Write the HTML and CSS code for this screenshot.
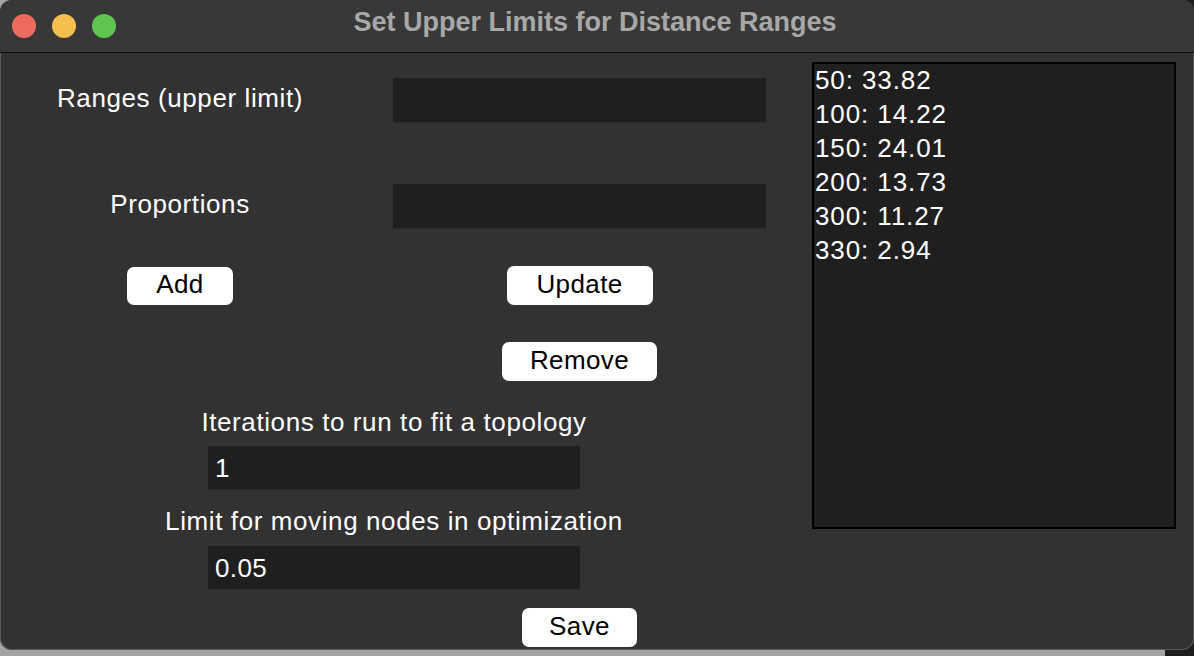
FILE: index.html
```html
<!DOCTYPE html>
<html>
<head>
<meta charset="utf-8">
<title>Set Upper Limits for Distance Ranges</title>
<link rel="stylesheet" href="styles.css">
</head>
<body>
<div class="window">
  <div class="titlebar">
    <div class="lights">
      <span class="light red"></span>
      <span class="light yellow"></span>
      <span class="light green"></span>
    </div>
    <div class="title">Set Upper Limits for Distance Ranges</div>
    <div class="spacer"></div>
  </div>
  <div class="content">
    <div class="left">
      <div class="row row-first">
        <div class="label">Ranges (upper limit)</div>
        <div class="entry"></div>
      </div>
      <div class="row row-second">
        <div class="label">Proportions</div>
        <div class="entry"></div>
      </div>
      <div class="row row-buttons">
        <div class="cell"><button class="btn btn-add">Add</button></div>
        <div class="cell"><button class="btn btn-update">Update</button></div>
      </div>
      <div class="row row-remove">
        <div class="cell"></div>
        <div class="cell"><button class="btn btn-remove">Remove</button></div>
      </div>
      <div class="block">
        <div class="label label-iter">Iterations to run to fit a topology</div>
        <div class="entry entry-wide entry-iter">1</div>
        <div class="label label-limit">Limit for moving nodes in optimization</div>
        <div class="entry entry-wide entry-limit">0.05</div>
      </div>
      <div class="row row-save">
        <div class="cell"></div>
        <div class="cell"><button class="btn btn-save">Save</button></div>
      </div>
    </div>
    <div class="listbox">
      <div class="item">50: 33.82</div>
      <div class="item">100: 14.22</div>
      <div class="item">150: 24.01</div>
      <div class="item">200: 13.73</div>
      <div class="item">300: 11.27</div>
      <div class="item">330: 2.94</div>
    </div>
  </div>
</div>
</body>
</html>
```
FILE: styles.css
```css
html, body {
  margin: 0;
  padding: 0;
}
body {
  width: 1194px;
  height: 656px;
  overflow: hidden;
  background: linear-gradient(to right, #a3a3a3 0, #a3a3a3 1165px, #1d1d1d 1165px);
  font-family: "Liberation Sans", Arial, sans-serif;
}
.window {
  width: 1194px;
  height: 650px;
  box-sizing: border-box;
  background: #323232;
  border-radius: 12px;
  overflow: hidden;
  box-shadow: inset 0 0 0 1px #5a5a5a;
}
.titlebar {
  height: 52px;
  background: #383838;
  border-bottom: 1px solid #0e0e0e;
  display: grid;
  grid-template-columns: 1fr auto 1fr;
  align-items: center;
}
.lights {
  display: flex;
  gap: 16px;
  padding-left: 12px;
}
.light {
  width: 24px;
  height: 24px;
  border-radius: 50%;
  display: block;
}
.red { background: #ed6a5e; }
.yellow { background: #f5bf4f; }
.green { background: #61c554; }
.title {
  color: #a8a8a8;
  font-weight: bold;
  font-size: 27px;
  padding-bottom: 7px;
  padding-right: 4px;
}
.content {
  display: flex;
  height: 597px;
}
.left {
  width: 790px;
  display: flex;
  flex-direction: column;
}
.row {
  display: grid;
  grid-template-columns: 360px 373px;
  column-gap: 33px;
  align-items: center;
}
.row-first { margin-top: 25px; height: 45px; }
.row-second { margin-top: 61px; height: 45px; }
.row-buttons { margin-top: 37px; height: 39px; }
.row-remove { margin-top: 37px; height: 39px; }
.row-save { margin-top: 18px; height: 39px; }
.row .label {
  padding-bottom: 5px;
}
.cell {
  display: flex;
  justify-content: center;
  align-items: center;
}
.label {
  color: #ffffff;
  font-size: 26px;
  text-align: center;
  white-space: nowrap;
  letter-spacing: 0.6px;
}
.entry {
  height: 45px;
  background: #1f1f1f;
  box-shadow: inset 0 -1px 0 #2b2b2b;
  color: #ffffff;
  font-size: 26px;
  line-height: 45px;
  box-sizing: border-box;
  padding-left: 7px;
  letter-spacing: 0.4px;
}
.btn {
  background: #ffffff;
  color: #000000;
  border: none;
  border-radius: 7px;
  font-family: "Liberation Sans", Arial, sans-serif;
  font-size: 26px;
  letter-spacing: 0.4px;
  height: 39px;
  padding: 0 0 3px 0;
}
.btn-add { width: 106px; height: 38px; margin-top: 0; }
.btn-update { width: 146px; }
.btn-remove { width: 155px; }
.btn-save { width: 115px; }
.block {
  margin-left: 208px;
  width: 372px;
  display: flex;
  flex-direction: column;
  align-items: center;
}
.block .label {
  line-height: 30px;
}
.label-iter { margin-top: 26px; }
.label-limit { margin-top: 16px; }
.entry-wide {
  width: 372px;
  height: 44px;
  line-height: 44px;
}
.entry-iter { margin-top: 9px; }
.entry-limit { margin-top: 10px; }
.listbox {
  margin-top: 9px;
  margin-left: 22px;
  width: 364px;
  height: 467px;
  box-sizing: border-box;
  border: 2px solid #000000;
  background: #1f1f1f;
  padding-left: 1px;
}
.item {
  color: #ffffff;
  font-size: 26px;
  line-height: 34px;
  letter-spacing: 0.9px;
  white-space: nowrap;
  margin-top: -1px;
}
.item + .item {
  margin-top: 0;
}
```
